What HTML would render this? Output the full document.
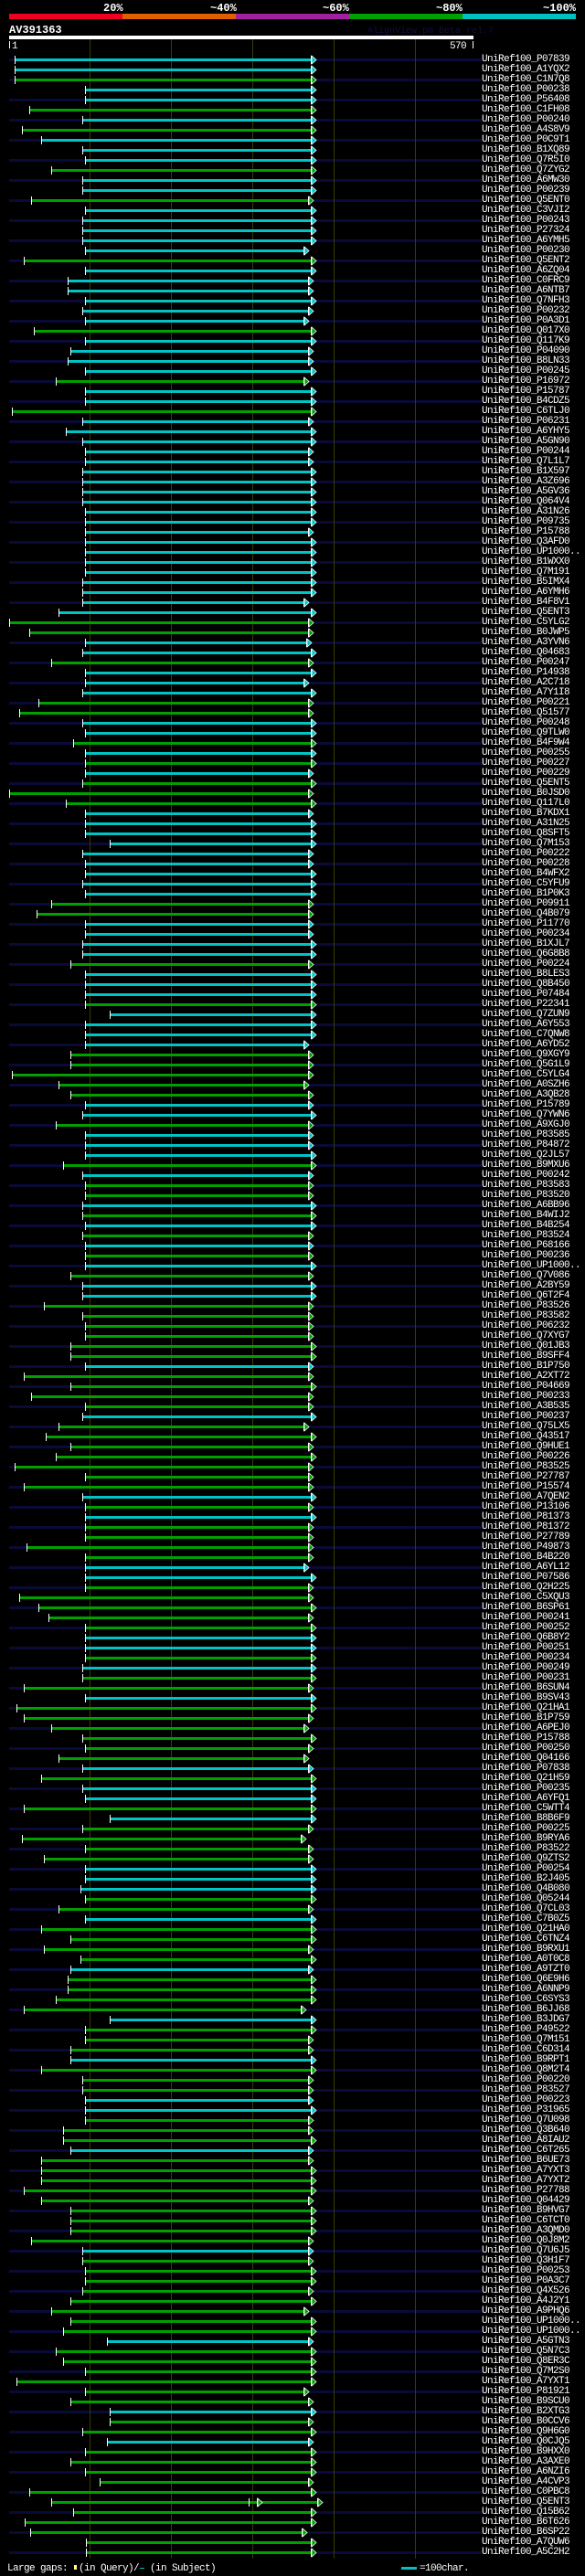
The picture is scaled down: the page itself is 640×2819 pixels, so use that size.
<!DOCTYPE html>
<html><head><meta charset="utf-8">
<style>
html,body{margin:0;padding:0;background:#000;}
body{width:640px;height:2819px;position:relative;overflow:hidden;font-family:"Liberation Mono",monospace;color:#fff;}
.t{position:absolute;font-weight:bold;font-size:12px;line-height:12px;white-space:pre;}
pre{position:absolute;margin:0;left:527px;top:60px;font-family:"Liberation Mono",monospace;font-size:11px;line-height:11px;letter-spacing:-0.6px;color:#fff;}
svg{position:absolute;left:0;top:0;}
</style></head><body>
<svg id="s" width="640" height="2819" xmlns="http://www.w3.org/2000/svg">
<rect x="10" y="15" width="124" height="6" fill="#f00020"/>
<rect x="134" y="15" width="124" height="6" fill="#e06000"/>
<rect x="258" y="15" width="124" height="6" fill="#a020a0"/>
<rect x="382" y="15" width="124" height="6" fill="#00a000"/>
<rect x="506" y="15" width="124" height="6" fill="#00c0c0"/>
<rect x="10" y="39" width="508" height="4" fill="#fff"/>
<rect x="10" y="45" width="1" height="8" fill="#fff"/>
<rect x="517" y="45" width="1" height="8" fill="#fff"/>
<rect x="439" y="2809" width="17" height="3" fill="#00c0c0"/>
<rect x="81" y="2807" width="3" height="5" fill="#ffff80"/>
<rect x="153" y="2810" width="5" height="1" fill="#00c0c0"/>
</svg>
<div class="t" style="left:113px;top:3px">20%</div>
<div class="t" style="left:230px;top:3px">~40%</div>
<div class="t" style="left:353px;top:3px">~60%</div>
<div class="t" style="left:477px;top:3px">~80%</div>
<div class="t" style="left:594px;top:3px">~100%</div>
<div class="t" style="left:10px;top:27px;font-size:12px">AV391363</div>
<div class="t" style="left:402px;top:29px;font-weight:normal;font-size:10px;color:#101040">AlignView.pm Beta rel.7</div>
<div class="t" style="left:13px;top:45px;font-weight:normal;font-size:11px;letter-spacing:-0.6px">1</div>
<div class="t" style="left:492px;top:45px;font-weight:normal;font-size:11px;letter-spacing:-0.6px">570</div>
<div class="t" style="left:8px;top:2805px;font-weight:normal;font-size:11px;letter-spacing:-0.6px">Large gaps:  (in Query)/  (in Subject)</div>
<div class="t" style="left:459px;top:2805px;font-weight:normal;font-size:11px;letter-spacing:-0.6px">=100char.</div>
<pre>UniRef100_P07839
UniRef100_A1YQX2
UniRef100_C1N7Q8
UniRef100_P00238
UniRef100_P56408
UniRef100_C1FH08
UniRef100_P00240
UniRef100_A4S8V9
UniRef100_P0C9T1
UniRef100_B1XQ89
UniRef100_Q7R5I0
UniRef100_Q7ZYG2
UniRef100_A6MW30
UniRef100_P00239
UniRef100_Q5ENT0
UniRef100_C3VJI2
UniRef100_P00243
UniRef100_P27324
UniRef100_A6YMH5
UniRef100_P00230
UniRef100_Q5ENT2
UniRef100_A6ZQ04
UniRef100_C0FRC9
UniRef100_A6NTB7
UniRef100_Q7NFH3
UniRef100_P00232
UniRef100_P0A3D1
UniRef100_Q017X0
UniRef100_Q117K9
UniRef100_P04090
UniRef100_B8LN33
UniRef100_P00245
UniRef100_P16972
UniRef100_P15787
UniRef100_B4CDZ5
UniRef100_C6TLJ0
UniRef100_P06231
UniRef100_A6YHY5
UniRef100_A5GN90
UniRef100_P00244
UniRef100_Q7L1L7
UniRef100_B1X597
UniRef100_A3Z696
UniRef100_A5GV36
UniRef100_Q064V4
UniRef100_A31N26
UniRef100_P09735
UniRef100_P15788
UniRef100_Q3AFD0
UniRef100_UP1000..
UniRef100_B1WXX0
UniRef100_Q7M191
UniRef100_B5IMX4
UniRef100_A6YMH6
UniRef100_B4F8V1
UniRef100_Q5ENT3
UniRef100_C5YLG2
UniRef100_B0JWP5
UniRef100_A3YVN6
UniRef100_Q04683
UniRef100_P00247
UniRef100_P14938
UniRef100_A2C718
UniRef100_A7Y1I8
UniRef100_P00221
UniRef100_Q51577
UniRef100_P00248
UniRef100_Q9TLW0
UniRef100_B4F9W4
UniRef100_P00255
UniRef100_P00227
UniRef100_P00229
UniRef100_Q5ENT5
UniRef100_B0JSD0
UniRef100_Q117L0
UniRef100_B7KDX1
UniRef100_A31N25
UniRef100_Q8SFT5
UniRef100_Q7M153
UniRef100_P00222
UniRef100_P00228
UniRef100_B4WFX2
UniRef100_C5YFU9
UniRef100_B1P0K3
UniRef100_P09911
UniRef100_Q4B079
UniRef100_P11770
UniRef100_P00234
UniRef100_B1XJL7
UniRef100_Q6G8B8
UniRef100_P00224
UniRef100_B8LES3
UniRef100_Q8B450
UniRef100_P07484
UniRef100_P22341
UniRef100_Q7ZUN9
UniRef100_A6Y553
UniRef100_C7QNW8
UniRef100_A6YD52
UniRef100_Q9XGY9
UniRef100_Q5G1L9
UniRef100_C5YLG4
UniRef100_A0SZH6
UniRef100_A3QB28
UniRef100_P15789
UniRef100_Q7YWN6
UniRef100_A9XGJ0
UniRef100_P83585
UniRef100_P84872
UniRef100_Q2JL57
UniRef100_B9MXU6
UniRef100_P00242
UniRef100_P83583
UniRef100_P83520
UniRef100_A6BB96
UniRef100_B4WIJ2
UniRef100_B4B254
UniRef100_P83524
UniRef100_P68166
UniRef100_P00236
UniRef100_UP1000..
UniRef100_Q7V086
UniRef100_A2BY59
UniRef100_Q6T2F4
UniRef100_P83526
UniRef100_P83582
UniRef100_P06232
UniRef100_Q7XYG7
UniRef100_Q01JB3
UniRef100_B9SFF4
UniRef100_B1P750
UniRef100_A2XT72
UniRef100_P04669
UniRef100_P00233
UniRef100_A3B535
UniRef100_P00237
UniRef100_Q75LX5
UniRef100_Q43517
UniRef100_Q9HUE1
UniRef100_P00226
UniRef100_P83525
UniRef100_P27787
UniRef100_P15574
UniRef100_A7QEN2
UniRef100_P13106
UniRef100_P81373
UniRef100_P81372
UniRef100_P27789
UniRef100_P49873
UniRef100_B4B220
UniRef100_A6YL12
UniRef100_P07586
UniRef100_Q2H225
UniRef100_C5XQU3
UniRef100_B6SP61
UniRef100_P00241
UniRef100_P00252
UniRef100_Q6B8Y2
UniRef100_P00251
UniRef100_P00234
UniRef100_P00249
UniRef100_P00231
UniRef100_B6SUN4
UniRef100_B9SV43
UniRef100_Q21HA1
UniRef100_B1P759
UniRef100_A6PEJ0
UniRef100_P15788
UniRef100_P00250
UniRef100_Q04166
UniRef100_P07838
UniRef100_Q21H59
UniRef100_P00235
UniRef100_A6YFQ1
UniRef100_C5WTT4
UniRef100_B8B6F9
UniRef100_P00225
UniRef100_B9RYA6
UniRef100_P83522
UniRef100_Q9ZTS2
UniRef100_P00254
UniRef100_B2J405
UniRef100_Q4B080
UniRef100_Q05244
UniRef100_Q7CL03
UniRef100_C7B0Z5
UniRef100_Q21HA0
UniRef100_C6TNZ4
UniRef100_B9RXU1
UniRef100_A0T0C8
UniRef100_A9TZT0
UniRef100_Q6E9H6
UniRef100_A6NNP9
UniRef100_C6SYS3
UniRef100_B6JJ68
UniRef100_B3JDG7
UniRef100_P49522
UniRef100_Q7M151
UniRef100_C6D314
UniRef100_B9RPT1
UniRef100_Q8M2T4
UniRef100_P00220
UniRef100_P83527
UniRef100_P00223
UniRef100_P31965
UniRef100_Q7U098
UniRef100_Q3B640
UniRef100_A8IAU2
UniRef100_C6T265
UniRef100_B6UE73
UniRef100_A7YXT3
UniRef100_A7YXT2
UniRef100_P27788
UniRef100_Q04429
UniRef100_B9HVG7
UniRef100_C6TCT0
UniRef100_A3QMD0
UniRef100_Q0J8M2
UniRef100_Q7U6J5
UniRef100_Q3H1F7
UniRef100_P00253
UniRef100_P0A3C7
UniRef100_Q4X526
UniRef100_A4J2Y1
UniRef100_A9PHQ6
UniRef100_UP1000..
UniRef100_UP1000..
UniRef100_A5GTN3
UniRef100_Q5N7C3
UniRef100_Q8ER3C
UniRef100_Q7M2S0
UniRef100_A7YXT1
UniRef100_P81921
UniRef100_B9SCU0
UniRef100_B2XTG3
UniRef100_B0CCV6
UniRef100_Q9H6G0
UniRef100_Q0CJQ5
UniRef100_B9HXX0
UniRef100_A3AXE0
UniRef100_A6NZI6
UniRef100_A4CVP3
UniRef100_C0PBC8
UniRef100_Q5ENT3
UniRef100_Q15B62
UniRef100_B6T626
UniRef100_B6SP22
UniRef100_A7QUW6
UniRef100_A5C2H2</pre>
<script>
(function(){
var d="16c 16c 16g 93c 93c 32g 90c 24g 45c 90c 93c 56g 90c 90c 34g337 93c 90c 90c 90c 93c332 26g 93c 74c337 74c337 93c 90c337 93c332 37g 93c 77c337 74c337 93c 61g332 93c 93c 13g 90c337 72c 90c 93c337 93c337 "+
"90c 90c 90c 90c 93c 93c 93c337 93c 93c 93c 93c 90c 90c 90c332 64c 10g337 32g337 93c335 90c 56g337 93c 93c332 90c 42g337 21g337 90c 93c 80g 93c 93g 93c337 90g 10g337 72g 93c337 93c 93c 120c 90c337 93c337 93c 90c "+
"93c 56g337 40g337 93c337 93c337 90c 90c 77g337 93c 93c 93c 93g 120c 93c 93c 93c332 77g337 77g337 13g337 64g332 77g337 93c337 90c 61g337 93c337 93c337 93c 69g 90c337 93g337 93g337 90c 90g 93c 90g337 93c337 93g337 93c 77g337 90c 90c "+
"48g337 90g337 93g337 93g337 77g 77g 93c337 26g337 77g 34g337 93g337 90c 64g332 50g 77g337 61g 16g337 93g337 26g337 90c 93g337 93c 93g337 93g337 29g337 93g337 93c332 93c 93g337 21g337 42g 53g337 93g 93c 93c 93g 90c 90g 26g337 93c 18g 26g337 "+
"56g332 90g 93g337 64g332 90c337 45g 90c 93c 26g 120c 90g337 24g329 93g337 48g337 93c 93c 88c 93g 64g337 93c 45g 77g 48g337 88g 77c337 74g 74g 61g 26g329 120c 93g 93g337 77g337 77c 45g 90g337 90g337 93c337 93c 93g337 69g337 "+
"69g 77c337 45g337 45g 45g 26g 45g337 77g 77g 77g 34g337 90c337 90g337 93g 93g 90g337 77g 56g332 77g 69g 117c337 61g 69g 93g 18g 93g332 77g337 120c 120g337 90g 117c337 93g 77g 93g 109g337 32g 56g347 80g 27g 33g330 94g 94g";
var rows=d.split(" "),s=document.getElementById("s"),h="";
var nav="#0a0a38",grid="#3a3a08";
for(var i=0;i<rows.length;i++){var y=65+i*11;if(i%2==0)h+='<rect x="10" y="'+(y-1)+'" width="517" height="3" fill="'+nav+'"/>';}
[98,187,276,365,454].forEach(function(x){h+='<rect x="'+x+'" y="43" width="1" height="2757" fill="'+grid+'"/>';});
function arrow(e,y,c){return '<rect x="'+e+'" y="'+(y-4)+'" width="1" height="9" fill="#fff"/><polygon points="'+(e+1)+','+(y-4)+' '+(e+6)+','+(y+0.5)+' '+(e+1)+','+(y+5)+'" fill="'+c+'" stroke="#fff" stroke-width="0.8"/>';}
for(var i=0;i<rows.length;i++){
 var m=rows[i].match(/(\d+)([cg])(\d*)/);var st=+m[1],c=m[2]=="c"?"#00c4c4":"#00a000",e=m[3]?+m[3]:340;var y=65+i*11;
 h+='<rect x="'+st+'" y="'+(y-1)+'" width="'+(e-st)+'" height="3" fill="'+c+'"/>';
 h+='<rect x="'+st+'" y="'+(y-4)+'" width="1" height="9" fill="#fff"/>';
 if(e==347){h+='<rect x="272" y="'+(y-4)+'" width="1" height="9" fill="#fff"/>'+arrow(281,y,c);}
 h+=arrow(e,y,c);
}
s.insertAdjacentHTML("beforeend",h);
})();
</script>
</body></html>
